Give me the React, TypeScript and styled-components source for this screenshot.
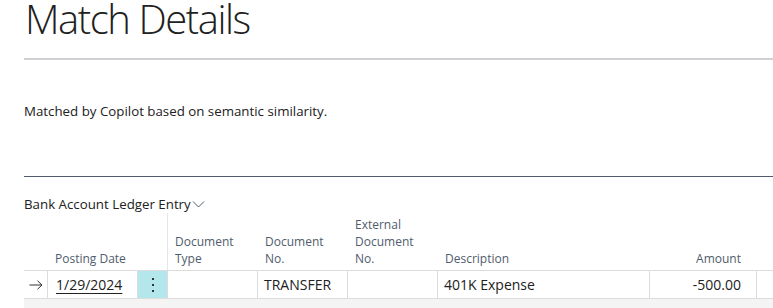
import React from "react";
import styled, { createGlobalStyle } from "styled-components";

const GlobalStyle = createGlobalStyle`
    body {
        margin: 0;
        background: #fff;
        font-family: "Open Sans", "Noto Sans", sans-serif;
        color: #212121;
    }
`

interface Column {
    key: string,
    label: string[],
    width: number,
    align?: "left" | "right"
}

const columns: Column[] = [
    { key: "type", label: ["Document", "Type"], width: 90 },
    { key: "no", label: ["Document", "No."], width: 90 },
    { key: "ext", label: ["External", "Document", "No."], width: 90 },
    { key: "desc", label: ["Description"], width: 212 },
    { key: "amount", label: ["Amount"], width: 107, align: "right" },
]

const row: Record<string, string> = {
    type: "",
    no: "TRANSFER",
    ext: "",
    desc: "401K Expense",
    amount: "-500.00",
}

const App = () => {
    return (
        <Page>
            <GlobalStyle />
            <Title>Match Details</Title>
            <Note>Matched by Copilot based on semantic similarity.</Note>
            <PartHeader>
                Bank Account Ledger Entry
                <svg width="13" height="8" viewBox="0 0 13 8">
                    <path d="M1 1.5 L6.5 7 L12 1.5" fill="none" stroke="#505c6d" strokeWidth="1" />
                </svg>
            </PartHeader>
            <Grid>
                <HeadRow>
                    <HeadCell $width={24} />
                    <HeadCell $width={120} $divider>
                        <span>Posting Date</span>
                    </HeadCell>
                    {columns.map((c) => (
                        <HeadCell key={c.key} $width={c.width} $align={c.align}>
                            {c.label.map((l, k) => <span key={k}>{l}</span>)}
                        </HeadCell>
                    ))}
                    <HeadCell $width={16} />
                </HeadRow>
                <BodyRow>
                    <ArrowCell>
                        <svg width="14" height="10" viewBox="0 0 14 10">
                            <path d="M0.5 5 H13 M8.5 0.8 L13 5 L8.5 9.2" fill="none" stroke="#333" strokeWidth="1" />
                        </svg>
                    </ArrowCell>
                    <Cell $width={90}>
                        <DateLink>1/29/2024</DateLink>
                    </Cell>
                    <MenuCell>
                        <svg width="4" height="16" viewBox="0 0 4 16">
                            <rect x="1" y="1" width="2" height="2" fill="#333" />
                            <rect x="1" y="7" width="2" height="2" fill="#333" />
                            <rect x="1" y="13" width="2" height="2" fill="#333" />
                        </svg>
                    </MenuCell>
                    {columns.map((c) => (
                        <Cell key={c.key} $width={c.width} $align={c.align}>{row[c.key]}</Cell>
                    ))}
                    <Cell $width={16} />
                </BodyRow>
                <EmptyRow />
            </Grid>
        </Page>
    )
}

const Page = styled.div`
    padding: 0 0 0 24px;
    height: 308px;
    overflow: hidden;
`

const Title = styled.h1`
    margin: 0;
    padding: 0 0 0 1px;
    font-weight: 300;
    font-size: 40px;
    line-height: 38px;
    color: #212121;
    letter-spacing: -1.45px;
    border-bottom: 2px solid #d1d1d5;
    box-sizing: border-box;
    height: 60px;
`

const Note = styled.div`
    padding: 42px 0 0;
    height: 117px;
    box-sizing: border-box;
    font-size: 13.3px;
    line-height: 18px;
    border-bottom: 1px solid #505c6d;
`

const PartHeader = styled.div`
    display: flex;
    align-items: flex-end;
    gap: 1px;
    height: 36px;
    box-sizing: border-box;
    font-size: 13.3px;
    line-height: 18px;
    color: #212121;
    svg { margin-bottom: 5px; }
`

const Grid = styled.div`
    display: flex;
    flex-direction: column;
`

const HeadRow = styled.div`
    display: flex;
    height: 57px;
`

const HeadCell = styled.div<{ $width: number, $align?: string, $divider?: boolean }>`
    flex: 0 0 ${p => p.$width}px;
    display: flex;
    flex-direction: column;
    justify-content: flex-end;
    align-items: ${p => p.$align === "right" ? "flex-end" : "flex-start"};
    box-sizing: border-box;
    padding: 0 ${p => p.$align === "right" ? "16px" : "6px"} 3px 7px;
    font-size: 12px;
    line-height: 17px;
    color: #505c6d;
    border-right: ${p => p.$divider ? "1px solid #e6e6e6" : "none"};
`

const BodyRow = styled.div`
    display: flex;
    height: 29px;
    border-top: 1px solid #dcdcdc;
    border-bottom: 1px solid #dcdcdc;
    box-sizing: border-box;
`

const Cell = styled.div<{ $width: number, $align?: string }>`
    flex: 0 0 ${p => p.$width}px;
    box-sizing: border-box;
    display: flex;
    align-items: center;
    justify-content: ${p => p.$align === "right" ? "flex-end" : "flex-start"};
    padding: 0 ${p => p.$align === "right" ? "15px" : "6px"} 0 6px;
    font-size: 14px;
    color: #212121;
    border-right: 1px solid #dcdcdc;
    &:last-child { border-right: none; }
`

const ArrowCell = styled.div`
    flex: 0 0 24px;
    box-sizing: border-box;
    display: flex;
    align-items: center;
    justify-content: center;
    border-right: 1px solid #dcdcdc;
`

const MenuCell = styled.div`
    flex: 0 0 30px;
    box-sizing: border-box;
    display: flex;
    align-items: center;
    justify-content: center;
    background: #b3e7ec;
    border-right: 1px solid #dcdcdc;
`

const DateLink = styled.span`
    text-decoration: underline;
    text-underline-offset: 3px;
    padding-left: 2px;
`

const EmptyRow = styled.div`
    height: 12px;
    background: #f4f4f4;
`

export default App
